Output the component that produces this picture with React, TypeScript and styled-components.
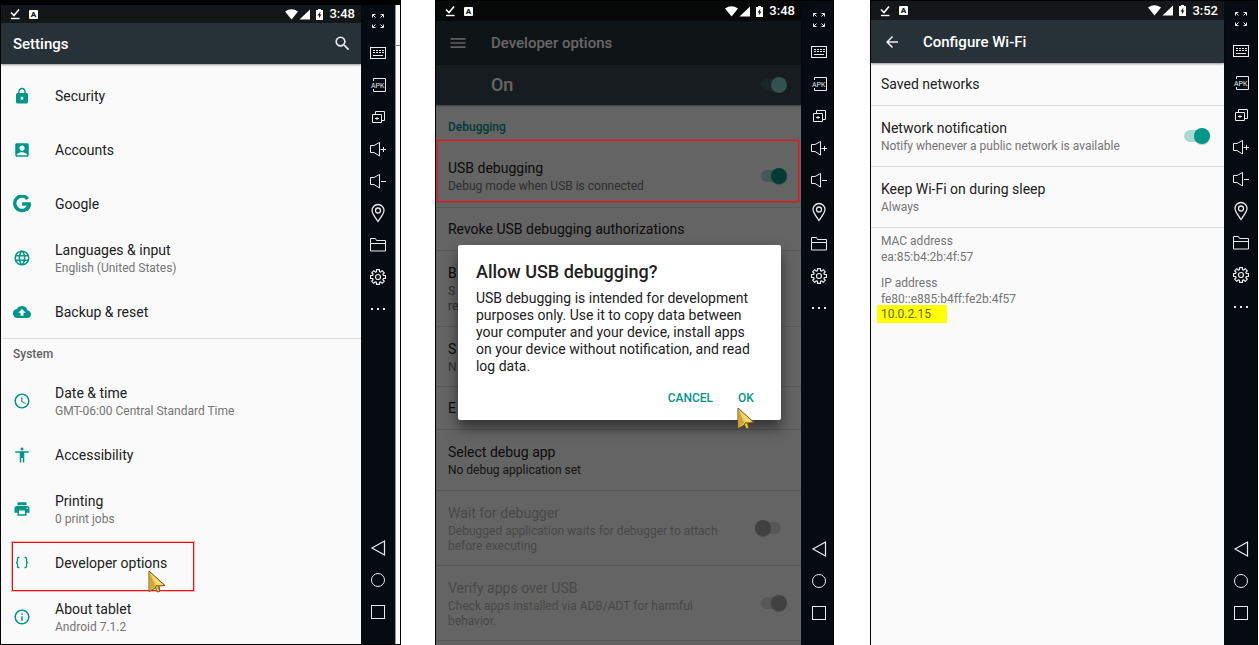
import React from 'react';
import styled, { createGlobalStyle, css } from 'styled-components';
import {
  MdAccessTime,
  MdAccessibility,
  MdAccountBox,
  MdArrowBack,
  MdBackup,
  MdInfoOutline,
  MdLanguage,
  MdLock,
  MdMenu,
  MdPrint,
  MdSearch,
} from 'react-icons/md';

const color = {
  teal: '#009688',
  appBar: '#263238',
  subBar: '#37474f',
  page: '#fafafa',
  text: '#212121',
  muted: '#757575',
  rail: '#060b12',
  line: '#dcdcdc',
  red: '#f01010',
};

const GlobalStyle = createGlobalStyle`
  *, *::before, *::after { box-sizing: border-box; }
  body { margin: 0; background: #fff; font-family: Roboto, "Liberation Sans", sans-serif; color: ${color.text}; }
  h1, h2, h3, p, ul, dl, dd { margin: 0; padding: 0; font-weight: 400; }
  ul { list-style: none; }
  button { font: inherit; color: inherit; background: none; border: 0; padding: 0; text-align: left; cursor: pointer; }
`;

const Page = styled.main`
  display: flex;
  min-height: 100vh;
  padding-right: 1px;
`;

const Device = styled.section<{ $share: number; $gap?: number; $top?: number; $closed?: boolean }>`
  flex: ${p => p.$share} 1 0;
  min-width: 0;
  margin-left: ${p => p.$gap ?? 0}px;
  display: flex;
  border: 1px solid #000;
  border-top-width: ${p => p.$top ?? 1}px;
  border-bottom-width: ${p => (p.$closed ? 1 : 0)}px;
`;

const Screen = styled.div`
  position: relative;
  flex: 1;
  min-width: 0;
  display: flex;
  flex-direction: column;
  background: ${color.page};
`;

/* ---------- status bar ---------- */

const Status = styled.header<{ $dim?: boolean; $height: number }>`
  position: relative;
  z-index: 3;
  display: flex;
  align-items: center;
  height: ${p => p.$height}px;
  padding: 0 6px 0 8px;
  background: ${p => (p.$dim ? '#070909' : '#131719')};
  color: #fff;
`;

const StatusSide = styled.div<{ $end?: boolean }>`
  display: flex;
  align-items: center;
  gap: ${p => (p.$end ? 6 : 8)}px;
  margin-left: ${p => (p.$end ? 'auto' : 0)};
  svg { display: block; }
`;

const Badge = styled.span`
  width: 9px;
  height: 9px;
  border-radius: 1px;
  background: #fff;
  color: #131719;
  font-size: 8px;
  font-weight: 900;
  line-height: 9px;
  text-align: center;
`;

const Clock = styled.time`
  font-size: 13px;
  font-weight: 500;
  line-height: 16px;
`;

function StatusBar({ time, dim, height }: { time: string; dim?: boolean; height: number }) {
  return (
    <Status $dim={dim} $height={height}>
      <StatusSide>
        <svg width="12" height="12" viewBox="0 0 12 12" fill="none" stroke="#fff" strokeWidth="1.6">
          <path d="M2 4.5 5 7.5 10 1.5" />
          <path d="M2 10.5H10.5" strokeWidth="1.4" />
        </svg>
        <Badge>A</Badge>
      </StatusSide>
      <StatusSide $end>
        <svg width="25" height="11" viewBox="0 0 25 11" fill="#fff">
          <path d="M0 2.500Q6.500-2 13 2.500L6.500 10.500Z" />
          <path d="M25 .500V10.500H14.500Z" />
        </svg>
        <svg width="7" height="11" viewBox="0 0 7 11">
          <path d="M2 0H5V1H7V11H0V1H2Z" fill="#fff" />
          <path d="M4.500 2.500 1.500 6.500H3.200L2.700 9.500 5.500 5.500H3.900Z" fill="#131719" />
        </svg>
        <Clock>{time}</Clock>
      </StatusSide>
    </Status>
  );
}

/* ---------- app bars ---------- */

const AppBar = styled.div<{ $height: number; $sub?: boolean }>`
  display: flex;
  align-items: center;
  height: ${p => p.$height}px;
  padding: ${p => (p.$sub ? '0 14px 0 12px' : '0 9px 0 12px')};
  background: ${p => (p.$sub ? color.subBar : color.appBar)};
  box-shadow: 0 1px 2px rgba(0, 0, 0, 0.4);
  color: #fff;
`;

const BarTitle = styled.h1<{ $inset?: number; $size?: number }>`
  flex: 1;
  padding-left: ${p => p.$inset ?? 0}px;
  font-size: ${p => p.$size ?? 15}px;
  font-weight: 500;
  line-height: 20px;
`;

const BarButton = styled.button`
  display: flex;
  color: #eceff0;
`;

/* ---------- settings list ---------- */

const List = styled.ul<{ $spaced?: boolean }>`
  padding-top: ${p => (p.$spaced ? 5 : 0)}px;
`;

const Rule = styled.hr`
  margin: -1px 0 0;
  border: 0;
  border-top: 1px solid ${color.line};
`;

const GroupTitle = styled.h2`
  height: 35px;
  padding: 5px 12px 0;
  color: #616161;
  font-size: 12px;
  font-weight: 500;
  line-height: 20px;
`;

const marked = css<{ $marked?: boolean }>`
  ${p =>
    p.$marked &&
    css`
      &::after {
        content: '';
        position: absolute;
        z-index: 2;
        border: 1px solid ${color.red};
        box-shadow: 0 0 0 1px rgba(240, 16, 16, 0.3);
        pointer-events: none;
      }
    `}
`;

const Entry = styled.button<{ $marked?: boolean }>`
  position: relative;
  display: grid;
  grid-template-columns: 42px 1fr;
  align-items: center;
  width: 100%;
  height: 54px;
  padding: 0 12px;
  svg { display: block; color: ${color.teal}; }
  ${marked}
  &::after { top: 6px; left: 11px; width: 182px; height: 49px; }
`;

const Words = styled.span`
  display: block;
  min-width: 0;
  flex: 1;
`;

const Title = styled.span`
  display: block;
  font-size: 14px;
  line-height: 20px;
`;

const Note = styled.span<{ $strong?: boolean }>`
  display: block;
  margin-top: 1px;
  color: ${p => (p.$strong ? '#333' : color.muted)};
  font-size: 12px;
  line-height: 15px;
  white-space: pre-line;
`;

const Pointer = styled.svg`
  position: absolute;
  z-index: 4;
  width: 18px;
  height: 23px;
`;

const EntryPointer = styled(Pointer)`
  top: 34px;
  left: 147px;
`;

const DialogPointer = styled(Pointer)`
  right: 26px;
  bottom: -10px;
`;

function CursorShape() {
  return (
    <>
      <path d="M1 1 17 15.500 10.500 16 12 21 9.500 22 7.500 18 1 21.500Z" fill="#efc94f" stroke="#6b5416" strokeWidth="1" />
      <path d="M1.500 2 7 16 1.500 20.500Z" fill="#d0a536" />
      <path d="M3 4 14.500 14.500 9 15Z" fill="#f6da74" />
      <path d="M6.500 19 8.500 15.500 11 16.500 11.500 20.500" fill="none" stroke="#6b5416" />
    </>
  );
}

function GoogleMark() {
  return (
    <svg width="18" height="18" viewBox="1 1 18 18" fill="none" stroke="currentColor" strokeWidth="3.400">
      <path d="M15.700 5A7.200 7.200 0 1 0 17.100 10H10.200" />
      <path d="M17.200 10a7.200 7.200 0 0 1-3 5.800" />
    </svg>
  );
}

function Braces() {
  return (
    <svg width="18" height="18" viewBox="1 1 18 18" fill="none" stroke="currentColor" strokeWidth="1.300">
      <path d="M7.500 4.500H6.500Q5.500 4.500 5.500 5.500V8Q5.500 9.500 4 9.500 5.500 9.500 5.500 11V13.500Q5.500 14.500 6.500 14.500H7.500" />
      <path d="M12.500 4.500H13.500Q14.500 4.500 14.500 5.500V8Q14.500 9.500 16 9.500 14.500 9.500 14.500 11V13.500Q14.500 14.500 13.500 14.500H12.500" />
    </svg>
  );
}

type EntryData = { icon: React.ReactNode; title: string; note?: string; marked?: boolean };

const personal: EntryData[] = [
  { icon: <MdLock size={18} />, title: 'Security' },
  { icon: <MdAccountBox size={18} />, title: 'Accounts' },
  { icon: <GoogleMark />, title: 'Google' },
  { icon: <MdLanguage size={18} />, title: 'Languages & input', note: 'English (United States)' },
  { icon: <MdBackup size={18} />, title: 'Backup & reset' },
];

const system: EntryData[] = [
  { icon: <MdAccessTime size={18} />, title: 'Date & time', note: 'GMT-06:00 Central Standard Time' },
  { icon: <MdAccessibility size={18} />, title: 'Accessibility' },
  { icon: <MdPrint size={18} />, title: 'Printing', note: '0 print jobs' },
  { icon: <Braces />, title: 'Developer options', marked: true },
  { icon: <MdInfoOutline size={18} />, title: 'About tablet', note: 'Android 7.1.2' },
];

function Entries({ items }: { items: EntryData[] }) {
  return (
    <>
      {items.map(item => (
        <li key={item.title}>
          <Entry type="button" $marked={item.marked}>
            {item.icon}
            <Words>
              <Title>{item.title}</Title>
              {item.note && <Note>{item.note}</Note>}
            </Words>
            {item.marked && (
              <EntryPointer viewBox="0 0 18 23" aria-hidden="true">
                <CursorShape />
              </EntryPointer>
            )}
          </Entry>
        </li>
      ))}
    </>
  );
}

/* ---------- preference rows ---------- */

const Preference = styled.label<{ $height: number; $off?: boolean; $marked?: boolean; $inset: number }>`
  position: relative;
  display: flex;
  align-items: center;
  min-height: ${p => p.$height}px;
  padding: ${p => (p.$marked ? 5 : 0)}px 14px 0 ${p => p.$inset}px;
  border-bottom: 1px solid ${color.line};
  ${p => p.$off && css`${Title}, ${Note} { color: #b4b4b4; }`}
  ${marked}
  &::after { inset: 0 2px 5px 1px; }
`;

const Switch = styled.input<{ $pale?: boolean }>`
  appearance: none;
  position: relative;
  flex: none;
  width: 32px;
  height: 16px;
  margin: 0;
  &::before {
    content: '';
    position: absolute;
    top: 2px;
    left: 6px;
    width: 20px;
    height: 12px;
    border-radius: 6px;
    background: ${p => (p.$pale ? '#455e66' : '#cfcfcf')};
  }
  &::after {
    content: '';
    position: absolute;
    top: 0;
    left: 0;
    width: 16px;
    height: 16px;
    border-radius: 50%;
    background: #a2a2a2;
    box-shadow: 0 1px 1px rgba(0, 0, 0, 0.2);
  }
  &:checked::after {
    left: 16px;
    background: ${p => (p.$pale ? '#80cbc4' : color.teal)};
  }
  &:checked::before { background: ${p => (p.$pale ? '#455e66' : '#a8d9d4')}; }
  &:disabled::before { background: #dadada; }
  &:disabled::after { background: #a2a2a2; }
`;

const SectionTitle = styled.h2`
  height: 35px;
  padding: 12px 12px 0;
  color: ${color.teal};
  font-size: 12px;
  font-weight: 500;
  line-height: 20px;
`;

type PrefData = {
  title: string;
  note?: string;
  height: number;
  value?: boolean;
  off?: boolean;
  marked?: boolean;
  strong?: boolean;
};

const debugging: PrefData[] = [
  { title: 'USB debugging', note: 'Debug mode when USB is connected', height: 68, value: true, marked: true },
  { title: 'Revoke USB debugging authorizations', height: 43 },
  { title: 'B', note: 'S\nre', height: 76 },
  { title: 'S', note: 'N', height: 60 },
  { title: 'E', height: 43 },
  { title: 'Select debug app', note: 'No debug application set', height: 61, strong: true },
  { title: 'Wait for debugger', note: 'Debugged application waits for debugger to attach\nbefore executing', height: 75, value: false, off: true },
  { title: 'Verify apps over USB', note: 'Check apps installed via ADB/ADT for harmful\nbehavior.', height: 75, value: true, off: true },
];

const wifi: PrefData[] = [
  { title: 'Saved networks', height: 43 },
  { title: 'Network notification', note: 'Notify whenever a public network is available', height: 61, value: true },
  { title: 'Keep Wi-Fi on during sleep', note: 'Always', height: 61 },
];

function Preferences({ items, inset }: { items: PrefData[]; inset: number }) {
  return (
    <>
      {items.map(item => (
        <Preference
          key={item.title}
          as={item.value === undefined ? 'div' : 'label'}
          $height={item.height}
          $inset={inset}
          $off={item.off}
          $marked={item.marked}
        >
          <Words>
            <Title>{item.title}</Title>
            {item.note && <Note $strong={item.strong}>{item.note}</Note>}
          </Words>
          {item.value !== undefined && <Switch type="checkbox" defaultChecked={item.value} disabled={item.off} />}
        </Preference>
      ))}
    </>
  );
}

/* ---------- dialog ---------- */

const Scrim = styled.div`
  position: absolute;
  inset: 0;
  z-index: 1;
  background: rgba(0, 0, 0, 0.6);
`;

const DialogLayer = styled.div`
  position: absolute;
  inset: 19px 20px 0 22px;
  z-index: 3;
  display: flex;
  align-items: center;
`;

const Dialog = styled.div`
  position: relative;
  width: 100%;
  padding: 17px 18px 9px;
  border-radius: 2px;
  background: #fff;
  box-shadow: 0 8px 14px rgba(0, 0, 0, 0.5);
`;

const DialogTitle = styled.h2`
  font-size: 18px;
  font-weight: 500;
  line-height: 20px;
`;

const DialogText = styled.p`
  margin-top: 8px;
  font-size: 14px;
  line-height: 17px;
  white-space: pre-line;
`;

const DialogActions = styled.div`
  display: flex;
  justify-content: flex-end;
  gap: 25px;
  margin-top: 10px;
  padding-right: 9px;
`;

const DialogButton = styled.button`
  color: ${color.teal};
  font-size: 12px;
  font-weight: 500;
  line-height: 26px;
`;

/* ---------- address details ---------- */

const Details = styled.dl`
  padding: 5px 10px;
  color: ${color.muted};
  font-size: 12px;
  line-height: 16px;
  dd + dt { margin-top: 10px; }
`;

const Marker = styled.mark`
  display: block;
  width: 70px;
  margin: -2px 0 0 -4px;
  padding: 0 4px;
  border-radius: 1px;
  background: #ff0;
  color: #66661a;
  line-height: 18px;
`;

/* ---------- emulator tool rail ---------- */

const Rail = styled.aside<{ $width: number; $top: number; $shift: number }>`
  flex: none;
  display: flex;
  flex-direction: column;
  align-items: center;
  width: ${p => p.$width}px;
  padding: ${p => p.$top}px 0 16px ${p => p.$shift}px;
  background: ${color.rail};
`;

const RailButton = styled.button<{ $first?: boolean }>`
  display: flex;
  align-items: center;
  justify-content: center;
  width: 28px;
  height: 32px;
  margin-top: ${p => (p.$first ? 'auto' : 0)};
  svg { display: block; fill: none; stroke: #e8eaec; stroke-width: 1; }
  svg text { fill: #e8eaec; stroke: none; font-size: 7px; }
`;

const Edge = styled.div`
  flex: none;
  width: 5px;
  border-left: 1px solid #8f9496;
  background: linear-gradient(#7d7d7d, #7d7d7d) 0 40px / 100% 1px no-repeat #fdfdfd;
`;

const gearPath = (() => {
  const pts: string[] = [];
  for (let i = 0; i < 8; i++) {
    const base = (i * Math.PI) / 4;
    [[-0.27, 5.6], [-0.2, 7.6], [0.2, 7.6], [0.27, 5.6]].forEach(([a, r]) => {
      pts.push(`${(10 + r * Math.sin(base + a)).toFixed(2)} ${(10 - r * Math.cos(base + a)).toFixed(2)}`);
    });
  }
  return `M${pts.join('L')}Z`;
})();

const tools: { name: string; art: React.ReactNode; first?: boolean }[] = [
  {
    name: 'Full screen',
    art: <path d="M4.500 6.500V3.500H7.500M4.500 3.500 7.500 6.500M12.500 3.500H15.500V6.500M15.500 3.500 12.500 6.500M4.500 13.500V16.500H7.500M4.500 16.500 7.500 13.500M12.500 16.500H15.500V13.500M15.500 16.500 12.500 13.500" />,
  },
  {
    name: 'Keyboard',
    art: (
      <>
        <rect x="2.5" y="4.5" width="15" height="11" />
        <path d="M5 7.500H16M5 9.500H16" strokeDasharray="2 1" />
        <path d="M5 12.500H15" />
      </>
    ),
  },
  {
    name: 'Install APK',
    art: (
      <>
        <path d="M5.500 6V3.500H17.500V16.500H5.500V14" />
        <text x="3" y="13">APK</text>
      </>
    ),
  },
  {
    name: 'Multiple instances',
    art: <path d="M4.500 7.500H13.500V15.500H4.500ZM7.500 7.500V4.500H16.500V13.500H13.500M7 11.500H11M9 10V13" />,
  },
  { name: 'Volume up', art: <path d="M2.500 6.500H6L11.500 3.500V17L6 13.500H2.500ZM12.500 10.500H18M15.500 8V13" /> },
  { name: 'Volume down', art: <path d="M2.500 6.500H6L11.500 3.500V17L6 13.500H2.500ZM13 10.500H18" /> },
  {
    name: 'Location',
    art: (
      <g strokeWidth="1.300">
        <path d="M10 18.500C6.500 13.500 4 10.500 4 7.500A6 6 0 0 1 16 7.500C16 10.500 13.500 13.500 10 18.500Z" />
        <circle cx="10" cy="7.500" r="2.500" />
      </g>
    ),
  },
  { name: 'Shared folder', art: <path d="M2.500 16V3.500H7.500L8.500 5.500H17.500V16ZM2.500 8.500H17.500" /> },
  {
    name: 'Settings',
    art: (
      <g strokeWidth="1.200">
        <path d={gearPath} strokeLinejoin="round" />
        <circle cx="10" cy="10" r="2.500" />
      </g>
    ),
  },
  { name: 'More', art: <path d="M3 10H5M9 10H11M15 10H17" strokeWidth="2" /> },
  { name: 'Back', art: <path d="M16.500 3V17L4 10Z" strokeWidth="1.200" />, first: true },
  { name: 'Home', art: <circle cx="10" cy="10" r="6.500" /> },
  { name: 'Recent apps', art: <rect x="3.500" y="3.500" width="13" height="13" /> },
];

function ToolRail({ width, top, shift = 0 }: { width: number; top: number; shift?: number }) {
  return (
    <Rail $width={width} $top={top} $shift={shift}>
      {tools.map(tool => (
        <RailButton key={tool.name} type="button" aria-label={tool.name} $first={tool.first}>
          <svg width="20" height="20" viewBox="0 0 20 20">
            {tool.art}
          </svg>
        </RailButton>
      ))}
    </Rail>
  );
}

export default function App() {
  return (
    <>
      <GlobalStyle />
      <Page>
        <Device $share={401} $top={5} $closed>
          <Screen>
            <StatusBar time="3:48" height={18} />
            <AppBar $height={41}>
              <BarTitle>Settings</BarTitle>
              <BarButton type="button" aria-label="Search">
                <MdSearch size={19} />
              </BarButton>
            </AppBar>
            <List $spaced>
              <Entries items={personal} />
            </List>
            <Rule />
            <GroupTitle>System</GroupTitle>
            <List>
              <Entries items={system} />
            </List>
          </Screen>
          <ToolRail width={34} top={0} />
          <Edge />
        </Device>

        <Device $share={399} $gap={34}>
          <Screen>
            <StatusBar time="3:48" dim height={20} />
            <AppBar $height={44}>
              <BarButton type="button" aria-label="Menu">
                <MdMenu size={20} />
              </BarButton>
              <BarTitle $inset={23}>Developer options</BarTitle>
            </AppBar>
            <AppBar as="label" $height={40} $sub>
              <BarTitle as="span" $inset={43} $size={18}>
                On
              </BarTitle>
              <Switch type="checkbox" defaultChecked $pale />
            </AppBar>
            <SectionTitle>Debugging</SectionTitle>
            <Preferences items={debugging} inset={12} />
            <Scrim />
            <DialogLayer>
              <Dialog role="dialog" aria-labelledby="dialog-title">
                <DialogTitle id="dialog-title">Allow USB debugging?</DialogTitle>
                <DialogText>
                  {'USB debugging is intended for development\npurposes only. Use it to copy data between\nyour computer and your device, install apps\non your device without notification, and read\nlog data.'}
                </DialogText>
                <DialogActions>
                  <DialogButton type="button">CANCEL</DialogButton>
                  <DialogButton type="button">OK</DialogButton>
                </DialogActions>
                <DialogPointer viewBox="0 0 18 23" aria-hidden="true">
                  <CursorShape />
                </DialogPointer>
              </Dialog>
            </DialogLayer>
          </Screen>
          <ToolRail width={32} top={3} shift={4} />
        </Device>

        <Device $share={388} $gap={36}>
          <Screen>
            <StatusBar time="3:52" height={19} />
            <AppBar $height={43}>
              <BarButton type="button" aria-label="Back">
                <MdArrowBack size={18} />
              </BarButton>
              <BarTitle $inset={22}>Configure Wi-Fi</BarTitle>
            </AppBar>
            <Preferences items={wifi} inset={10} />
            <Details>
              <dt>MAC address</dt>
              <dd>ea:85:b4:2b:4f:57</dd>
              <dt>IP address</dt>
              <dd>
                fe80::e885:b4ff:fe2b:4f57
                <Marker>10.0.2.15</Marker>
              </dd>
            </Details>
          </Screen>
          <ToolRail width={33} top={2} />
        </Device>
      </Page>
    </>
  );
}
